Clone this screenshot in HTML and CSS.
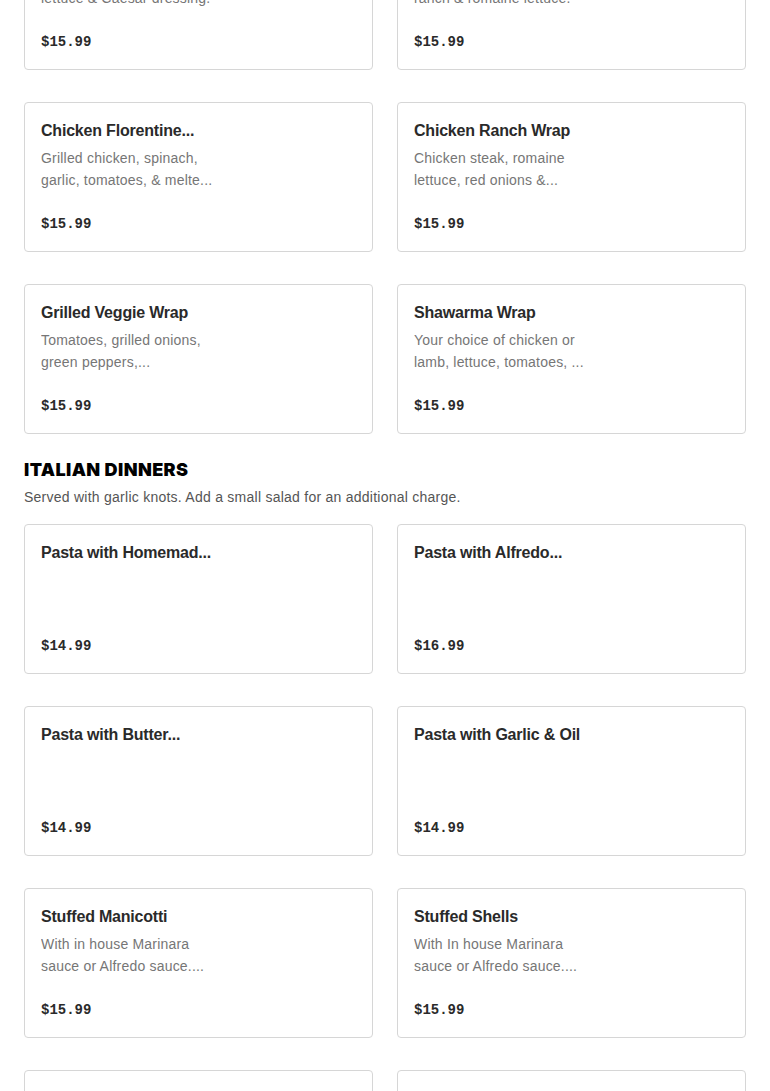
FILE: index.html
```html
<!DOCTYPE html>
<html lang="en">
<head>
<meta charset="utf-8">
<title>Menu</title>
<link rel="stylesheet" href="styles.css">
</head>
<body>
<main class="menu">
  <section class="section section-wraps">
    <div class="grid">
      <article class="card">
        <h3 class="card-title">Chicken Caesar Wrap</h3>
        <p class="card-desc">Grilled chicken, romaine lettuce &amp; Caesar dressing.</p>
        <p class="card-price">$15.99</p>
      </article>
      <article class="card">
        <h3 class="card-title">Buffalo Chicken Wrap</h3>
        <p class="card-desc">Crispy buffalo chicken, ranch &amp; romaine lettuce.</p>
        <p class="card-price">$15.99</p>
      </article>
      <article class="card">
        <h3 class="card-title">Chicken Florentine...</h3>
        <p class="card-desc">Grilled chicken, spinach, garlic, tomatoes, &amp; melte...</p>
        <p class="card-price">$15.99</p>
      </article>
      <article class="card">
        <h3 class="card-title">Chicken Ranch Wrap</h3>
        <p class="card-desc">Chicken steak, romaine lettuce, red onions &amp;...</p>
        <p class="card-price">$15.99</p>
      </article>
      <article class="card">
        <h3 class="card-title">Grilled Veggie Wrap</h3>
        <p class="card-desc">Tomatoes, grilled onions, green peppers,...</p>
        <p class="card-price">$15.99</p>
      </article>
      <article class="card">
        <h3 class="card-title">Shawarma Wrap</h3>
        <p class="card-desc">Your choice of chicken or lamb, lettuce, tomatoes, ...</p>
        <p class="card-price">$15.99</p>
      </article>
    </div>
  </section>

  <section class="section">
    <h2 class="section-title">ITALIAN DINNERS</h2>
    <p class="section-desc">Served with garlic knots. Add a small salad for an additional charge.</p>
    <div class="grid">
      <article class="card">
        <h3 class="card-title">Pasta with Homemad...</h3>
        <p class="card-desc"></p>
        <p class="card-price">$14.99</p>
      </article>
      <article class="card">
        <h3 class="card-title">Pasta with Alfredo...</h3>
        <p class="card-desc"></p>
        <p class="card-price">$16.99</p>
      </article>
      <article class="card">
        <h3 class="card-title">Pasta with Butter...</h3>
        <p class="card-desc"></p>
        <p class="card-price">$14.99</p>
      </article>
      <article class="card">
        <h3 class="card-title">Pasta with Garlic &amp; Oil</h3>
        <p class="card-desc"></p>
        <p class="card-price">$14.99</p>
      </article>
      <article class="card">
        <h3 class="card-title">Stuffed Manicotti</h3>
        <p class="card-desc">With in house Marinara sauce or Alfredo sauce....</p>
        <p class="card-price">$15.99</p>
      </article>
      <article class="card">
        <h3 class="card-title">Stuffed Shells</h3>
        <p class="card-desc">With In house Marinara sauce or Alfredo sauce....</p>
        <p class="card-price">$15.99</p>
      </article>
      <article class="card card-loading">
        <h3 class="card-title">Meat Lasagna with Garlic...</h3>
        <p class="card-desc"></p>
        <p class="card-price">$16.99</p>
      </article>
      <article class="card card-loading">
        <h3 class="card-title">Baked Ziti with Ricotta &amp;...</h3>
        <p class="card-desc"></p>
        <p class="card-price">$15.99</p>
      </article>
    </div>
  </section>
</main>
</body>
</html>
```

FILE: styles.css
```css
* { box-sizing: border-box; }

html, body {
  margin: 0;
  padding: 0;
  background: #ffffff;
  overflow: hidden;
}

body {
  font-family: "Liberation Sans", Arial, sans-serif;
  color: #191919;
}

.menu {
  padding: 0 24px;
  margin-top: -80px;
}

.grid {
  display: grid;
  grid-template-columns: 1fr 1fr;
  column-gap: 24px;
  row-gap: 32px;
}

.card {
  height: 150px;
  border: 1px solid #d6d6d6;
  border-radius: 4px;
  padding: 16px;
  display: flex;
  flex-direction: column;
  background: #fff;
}

.card-title {
  margin: 0;
  font-size: 16px;
  line-height: 24px;
  font-weight: 700;
  letter-spacing: -0.2px;
  color: #2a2a2a;
  white-space: nowrap;
  overflow: hidden;
}

.card-desc {
  margin: 4px 0 0;
  width: 182px;
  font-size: 14px;
  line-height: 22px;
  letter-spacing: 0.2px;
  color: #767676;
  display: -webkit-box;
  -webkit-line-clamp: 2;
  -webkit-box-orient: vertical;
  overflow: hidden;
}

.card-price {
  margin: auto 0 0;
  font-family: "Liberation Mono", "DejaVu Sans Mono", monospace;
  font-size: 14px;
  line-height: 22px;
  font-weight: 700;
  color: #2a2a2a;
}

.card-loading .card-title,
.card-loading .card-desc,
.card-loading .card-price {
  opacity: 0.06;
}

.section-title {
  margin: 24px 0 0;
  font-family: Inter, "Liberation Sans", sans-serif;
  font-weight: 900;
  font-size: 18px;
  line-height: 24px;
  letter-spacing: 0.4px;
  color: #000;
}

.section-desc {
  margin: 4px 0 16px;
  font-size: 14px;
  line-height: 22px;
  letter-spacing: 0.25px;
  color: #555;
}
```
